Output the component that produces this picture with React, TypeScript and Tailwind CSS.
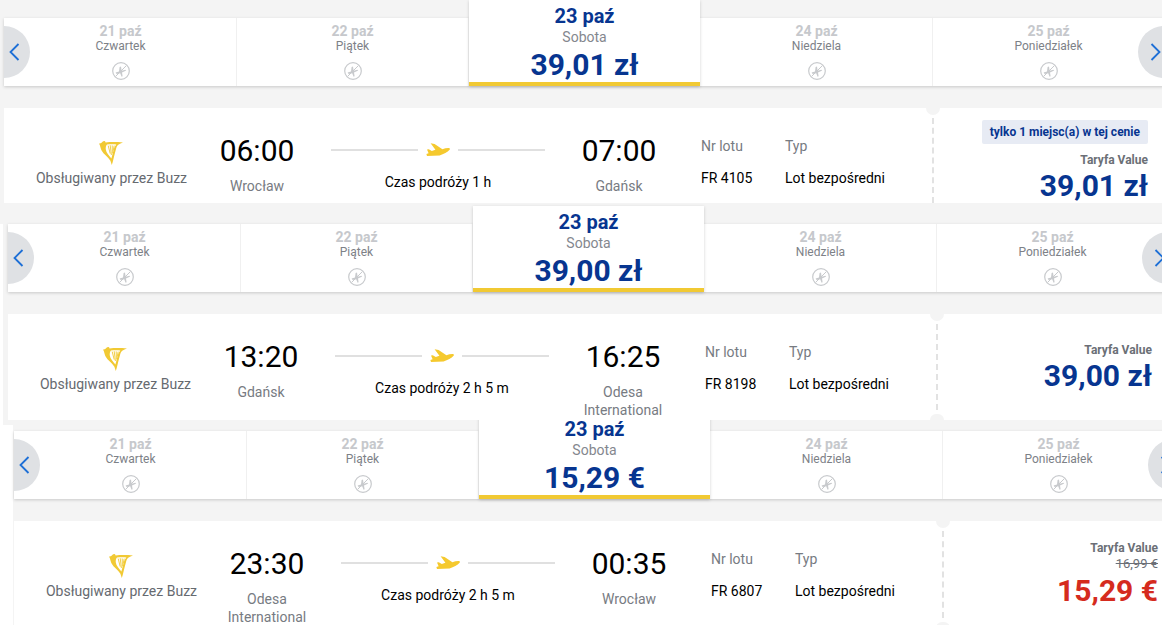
import React from 'react';

type Flight = {
  price: string;
  fromTime: string;
  fromCity: string;
  toTime: string;
  toCity: string;
  duration: string;
  flightNo: string;
  badge?: string;
  oldPrice?: string;
  sale?: boolean;
};

const days = [
  { date: '21 paź', name: 'Czwartek' },
  { date: '22 paź', name: 'Piątek' },
  { date: '23 paź', name: 'Sobota' },
  { date: '24 paź', name: 'Niedziela' },
  { date: '25 paź', name: 'Poniedziałek' },
];

const NoFlightIcon = () => (
  <svg width="18" height="18" viewBox="0 0 18 18" fill="none">
    <circle cx="9" cy="9" r="8.3" stroke="#c8cacd" strokeWidth="1.2" />
    <path d="M3.600 10.400 7 9.600 7.600 5 9 4.400l.6 4.400 3.800-1 .8.800-4.200 2 .6 3.600-1 .5-1.400-3.400-3.600.8z" fill="#c8cacd" />
    <path d="M3.600 14.400 14.400 3.600" stroke="#c8cacd" strokeWidth="1" />
  </svg>
);

const PlaneIcon = () => (
  <svg width="24" height="13" viewBox="0 0 24 13" fill="#f5c92e">
    <path d="M.4 11 1 13l12.600-.6c4-1 8-3.400 10-5.600.6-1 .2-1.800-1.200-1.800-2 0-4 .6-6 1.200L8.600 1 4.600.2l4.800 6.600-3.600 1.200L2.800 6.200 1 6.600l1.600 3.600z" />
  </svg>
);

const HarpLogo = () => (
  <svg width="25" height="25" viewBox="0 0 25 25" fill="none">
    <path d="M0 3.600c1.200 0 2-.2 2.800-1C3.600 1.600 4.200 .800 5.400 1c.8.100 1 .800 1.200 1.400 5.600-.6 11.600-.4 17.400 0-1.600.8-3.400 1.400-4.800 2.400-1 .8-1.600 2-2 3.400-1.200 4.400-2.400 9-3.400 13.600l-1 3.200-1.400-4.200C9 17 4.600 14.400 2.600 10.600 1.600 8.600 1.400 6 0 3.600z" fill="#f1c933" />
    <path d="M8 4.400c2.800-.3 7.200-.3 9.400 0-1.800 1.800-2.400 4-3 6.400l-2 7.600C10.400 15.600 7.200 13 6.800 9.400c-.2-1.800 0-3.600 1.200-5z" fill="#fff" />
    <path d="M9.200 5.600l2 8M11.200 5.200l1.200 9.800M13.200 5.400l.2 8M15.200 5.600l-1 5" stroke="#f1c933" strokeWidth="0.9" />
  </svg>
);

const DayStrip = ({ price }: { price: string }) => (
  <div className="relative flex w-[1160px] h-[68px] pl-[1px] bg-white shadow-[0_1px_3px_rgba(0,0,0,0.18)]">
    <div className="absolute left-0 top-[8px] z-20 flex items-center w-[26px] h-[52px] rounded-r-full bg-[#dfe1e4] pl-[5px]">
      <svg width="11" height="18" viewBox="0 0 11 18" fill="none">
        <path d="M9.500 1 1.500 9l8 8" stroke="#1d6fd6" strokeWidth="1.800" />
      </svg>
    </div>
    {days.map((d, i) =>
      i === 2 ? (
        <div
          key={d.date}
          className="relative z-[5] flex flex-col items-center shrink-0 w-[231px] mr-[1px] h-[86px] -mt-[18px] bg-white border-b-4 border-[#f1c933] shadow-[0_1px_3px_rgba(0,0,0,0.18)]"
        >
          <div className="mt-[5px] text-[20px] leading-[22px] font-bold text-[#073590]">{d.date}</div>
          <div className="mt-[1px] text-[14px] leading-[18px] text-[#84878e]">{d.name}</div>
          <div className="mt-[2px] text-[30px] leading-[34px] font-bold text-[#073590]">{price}</div>
        </div>
      ) : (
        <div key={d.date} className="flex flex-col items-center shrink-0 w-[232px] border-r border-[#f0f0f0] pt-[5px]">
          <div className="text-[14px] leading-[16px] font-bold text-[#c6c8cc]">{d.date}</div>
          <div className="text-[12px] leading-[14px] text-[#7d8187] mb-[9px]">{d.name}</div>
          <NoFlightIcon />
        </div>
      ),
    )}
    <div className="absolute right-0 top-[8px] z-20 flex items-center w-[26px] h-[52px] rounded-l-full bg-[#dfe1e4] pl-[12px]">
      <svg className="shrink-0" width="11" height="18" viewBox="0 0 11 18" fill="none">
        <path d="M1.500 1l8 8-8 8" stroke="#1d6fd6" strokeWidth="1.800" />
      </svg>
    </div>
  </div>
);

const FlightCard = ({ f, heightClass, fareClass, bottomNotch }: { f: Flight; heightClass: string; fareClass: string; bottomNotch: boolean }) => (
  <div className={`relative z-10 flex w-[1160px] bg-white mt-[22px] ${heightClass}`}>
    <div className="flex flex-col items-center w-[193px] pl-[22px] pt-[32px] text-[14px] leading-[18px] text-[#666a70]">
      <HarpLogo />
      <div className="mt-[4px] whitespace-nowrap">Obsługiwany przez Buzz</div>
    </div>
    <div className="flex flex-col items-center w-[120px] pt-[28px]">
      <div className="text-[30px] leading-[30px] text-black">{f.fromTime}</div>
      <div className="mt-[11px] w-[100px] text-center text-[14px] leading-[18px] text-[#777b82]">{f.fromCity}</div>
    </div>
    <div className="flex flex-col items-center w-[242px] px-[14px] pt-[35px]">
      <div className="flex items-center w-full gap-[8px] h-[13px]">
        <div className="flex-1 h-[2px] bg-[#e0e0e0]" />
        <PlaneIcon />
        <div className="flex-1 h-[2px] bg-[#e0e0e0]" />
      </div>
      <div className="mt-[17px] text-[14px] leading-[18px] text-black">{f.duration}</div>
    </div>
    <div className="flex flex-col items-center w-[120px] pt-[28px]">
      <div className="text-[30px] leading-[30px] text-black">{f.toTime}</div>
      <div className="mt-[11px] w-[100px] text-center text-[14px] leading-[18px] text-[#777b82]">{f.toCity}</div>
    </div>
    <div className="ml-[22px] w-[84px] pt-[29px] text-[14px] leading-[18px]">
      <div className="text-[#777b82]">Nr lotu</div>
      <div className="mt-[14px] text-black">{f.flightNo}</div>
    </div>
    <div className="w-[147px] pt-[29px] text-[14px] leading-[18px]">
      <div className="text-[#777b82]">Typ</div>
      <div className="mt-[14px] text-black">Lot bezpośredni</div>
    </div>
    <div className="relative w-0 border-l-2 border-dashed border-[#e2e2e2]">
      <div className="absolute -left-[8px] top-0 w-[14px] h-[7px] rounded-b-full bg-[#f4f4f4]" />
      {bottomNotch && <div className="absolute -left-[8px] bottom-0 w-[14px] h-[6px] rounded-t-full bg-[#f4f4f4]" />}
    </div>
    <div className={`flex flex-1 flex-col items-end pr-[16px] ${fareClass}`}>
      {f.badge && (
        <div className="h-[24px] px-[8px] mb-[8px] rounded-[2px] bg-[#e7ebf4] text-[12px] leading-[24px] font-bold text-[#073590] whitespace-nowrap">
          {f.badge}
        </div>
      )}
      <div className="text-[12px] leading-[16px] font-bold text-[#6b6f76]">Taryfa Value</div>
      {f.oldPrice && <div className="text-[13px] leading-[16px] line-through text-[#6b6f76]">{f.oldPrice}</div>}
      <div className={`text-[30px] leading-[36px] font-bold whitespace-nowrap ${f.sale ? 'mt-[1px] text-[#d52b1e]' : 'text-[#073590]'}`}>{f.price}</div>
    </div>
  </div>
);

const App: React.FC = () => {
  return (
    <div className="w-[1162px] h-[625px] overflow-hidden bg-white font-['Roboto',sans-serif]">
      <div className="h-[224px] -mb-[21px] pl-[4px] pt-[18px] bg-[#f4f4f4]">
        <DayStrip price="39,01 zł" />
        <FlightCard
          heightClass="h-[95px]"
          fareClass="pt-[12px]"
          bottomNotch={false}
          f={{ price: '39,01 zł', fromTime: '06:00', fromCity: 'Wrocław', toTime: '07:00', toCity: 'Gdańsk', duration: 'Czas podróży 1 h', flightNo: 'FR 4105', badge: 'tylko 1 miejsc(a) w tej cenie' }}
        />
      </div>
      <div className="h-[222px] -mb-[5px] ml-[3px] pl-[5px] pt-[21px] bg-[#f4f4f4]">
        <DayStrip price="39,00 zł" />
        <FlightCard
          heightClass="h-[106px]"
          fareClass="pt-[28px]"
          bottomNotch
          f={{ price: '39,00 zł', fromTime: '13:20', fromCity: 'Gdańsk', toTime: '16:25', toCity: 'Odesa International', duration: 'Czas podróży 2 h 5 m', flightNo: 'FR 8198' }}
        />
      </div>
      <div className="h-[205px] ml-[13px] pl-[1px] pt-[11px] bg-[#f4f4f4]">
        <DayStrip price="15,29 €" />
        <FlightCard
          heightClass="h-[107px]"
          fareClass="pt-[19px]"
          bottomNotch
          f={{ price: '15,29 €', fromTime: '23:30', fromCity: 'Odesa International', toTime: '00:35', toCity: 'Wrocław', duration: 'Czas podróży 2 h 5 m', flightNo: 'FR 6807', oldPrice: '16,99 €', sale: true }}
        />
      </div>
    </div>
  );
};

export default App;
